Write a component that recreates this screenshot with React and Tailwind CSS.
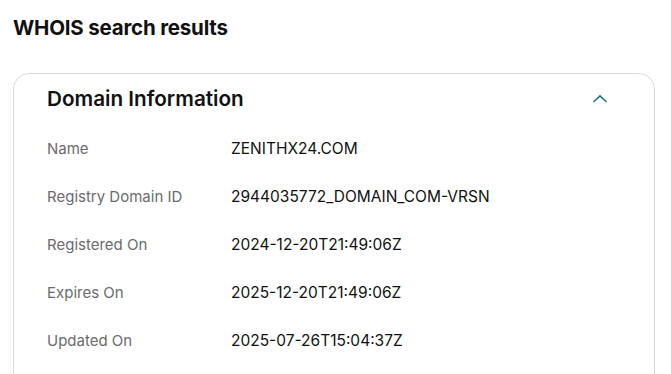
export default function App() {
  const rows = [
    ["Name", "ZENITHX24.COM"],
    ["Registry Domain ID", "2944035772_DOMAIN_COM-VRSN"],
    ["Registered On", "2024-12-20T21:49:06Z"],
    ["Expires On", "2025-12-20T21:49:06Z"],
    ["Updated On", "2025-07-26T15:04:37Z"],
  ];
  return (
    <div className="min-h-[374px] bg-white px-[13px] pt-[14px] font-['Inter',sans-serif] text-[#111]">
      <h1 className="text-[20.5px] font-bold leading-[28px] tracking-[-0.2px]">WHOIS search results</h1>
      <div className="mt-[31px] rounded-[16px] border border-[#d4dbe0] pl-[33px] pr-[46px] pt-[2px] pb-6 w-[642px]">
        <div className="flex h-[46px] items-center justify-between">
          <h2 className="text-[20.7px] font-semibold">Domain Information</h2>
          <svg width="16" height="10" viewBox="0 0 16 10">
            <path d="M1.5 8L8 1.8L14.5 8" fill="none" stroke="#1b7a80" strokeWidth="1.6" />
          </svg>
        </div>
        <div className="mt-[3px]">
          {rows.map(([k, v]) => (
            <div key={k} className="flex h-[48px] items-center">
              <div className="w-[184px] text-[15px] text-[#6b6b6b]">{k}</div>
              <div className="text-[15.5px] text-[#111]">{v}</div>
            </div>
          ))}
        </div>
      </div>
    </div>
  );
}
